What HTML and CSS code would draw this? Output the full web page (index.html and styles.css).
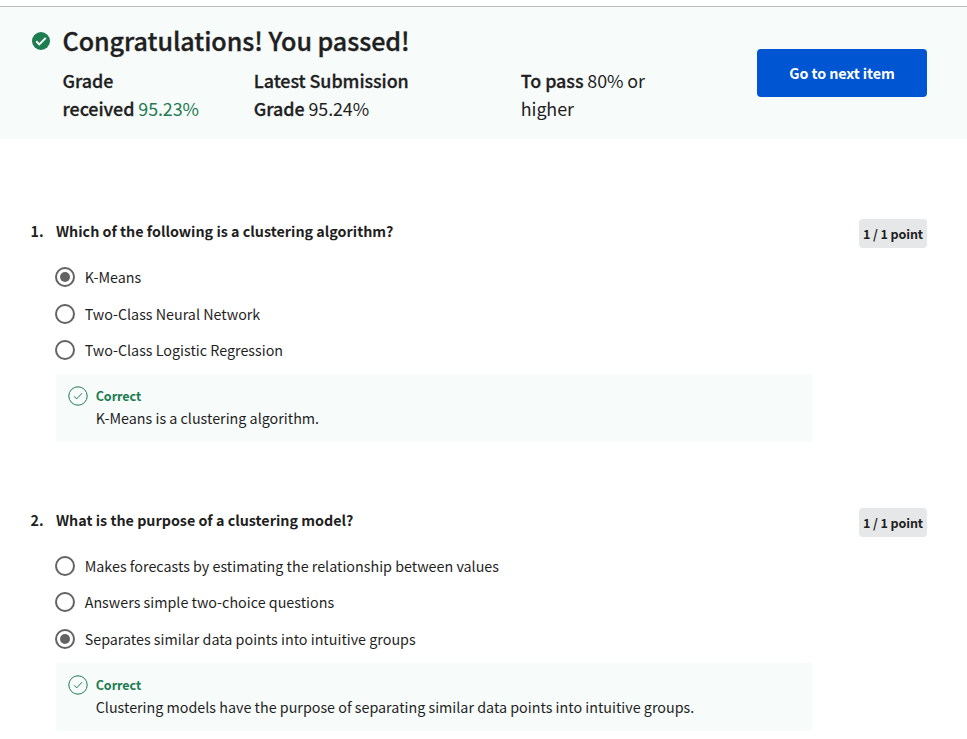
FILE: index.html
```html
<!DOCTYPE html>
<html lang="en">
<head>
<meta charset="utf-8">
<title>Quiz results</title>
<link rel="stylesheet" href="styles.css">
</head>
<body>
<header class="banner">
  <svg class="pass-icon" viewBox="0 0 18 18"><circle cx="9" cy="9" r="9" fill="#1d7c50"/><path d="M4.2 9.3 7.3 12.4 13.8 5.9" fill="none" stroke="#fff" stroke-width="2"/></svg>
  <div class="summary">
    <h1><span>Congratulations! You passed!</span></h1>
    <div class="grades">
      <div class="grade received"><b>Grade<br>received</b> <span class="green">95.23%</span></div>
      <div class="grade latest"><b>Latest Submission<br>Grade</b> <span>95.24%</span></div>
      <div class="grade"><b>To pass</b> <span>80% or<br>higher</span></div>
    </div>
  </div>
  <button class="next"><span>Go to next item</span></button>
</header>
<main>
  <section class="question">
    <div class="number">1.</div>
    <div class="body">
      <h2><span>Which of the following is a clustering algorithm?</span></h2>
      <div class="options">
        <label class="option"><i class="radio checked"></i><span>K-Means</span></label>
        <label class="option"><i class="radio"></i><span>Two-Class Neural Network</span></label>
        <label class="option"><i class="radio"></i><span>Two-Class Logistic Regression</span></label>
      </div>
      <div class="feedback">
        <svg class="ok" viewBox="0 0 20 20"><circle cx="10" cy="10" r="9.2"/><path d="M6.1 10.3 8.7 12.9 14 7.2"/></svg>
        <div><div class="correct"><span>Correct</span></div><p><span>K-Means is a clustering algorithm.</span></p></div>
      </div>
    </div>
    <div class="points"><span>1 / 1 point</span></div>
  </section>
  <section class="question">
    <div class="number">2.</div>
    <div class="body">
      <h2><span>What is the purpose of a clustering model?</span></h2>
      <div class="options">
        <label class="option"><i class="radio"></i><span>Makes forecasts by estimating the relationship between values</span></label>
        <label class="option"><i class="radio"></i><span>Answers simple two-choice questions</span></label>
        <label class="option"><i class="radio checked"></i><span>Separates similar data points into intuitive groups</span></label>
      </div>
      <div class="feedback">
        <svg class="ok" viewBox="0 0 20 20"><circle cx="10" cy="10" r="9.2"/><path d="M6.1 10.3 8.7 12.9 14 7.2"/></svg>
        <div><div class="correct"><span>Correct</span></div><p><span>Clustering models have the purpose of separating similar data points into intuitive groups.</span></p></div>
      </div>
    </div>
    <div class="points"><span>1 / 1 point</span></div>
  </section>
</main>
</body>
</html>
```
FILE: styles.css
```css
* { box-sizing: border-box; }
body {
  margin: 0;
  padding-top: 6px;
  background: #fff;
  color: #1f1f1f;
  font: 14.32px/24px "Noto Sans CJK SC", "Noto Sans", sans-serif;
}
h1, h2, p { margin: 0; }
.banner {
  display: flex;
  height: 133px;
  padding: 16px 40px 0 32px;
  border-top: 1px solid #bdbdbd;
  background: #f7fbfa;
}
.pass-icon { width: 18px; height: 18px; margin: 9px 12.5px 0 0; flex: none; }
.summary { flex: 1; }
h1 { font-size: 25.07px; line-height: 34px; font-weight: 500; letter-spacing: -0.04px; -webkit-text-stroke: 0.35px #1f1f1f; }
.grades { display: flex; margin-top: 9px; font-size: 17.9px; line-height: 28px; letter-spacing: -0.1px; white-space: nowrap; }
.grades b { font-weight: 500; letter-spacing: -0.06px; -webkit-text-stroke: 0.3px #1f1f1f; }
.received { width: 191.3px; }
.latest { width: 267px; }
.green { color: #1d7c50; }
.next {
  width: 170px;
  height: 48px;
  margin-top: 26px;
  border: 0;
  border-radius: 4px;
  background: #0056d2;
  color: #fff;
  font: 700 14.33px/24px "Noto Sans CJK SC", "Noto Sans", sans-serif;
  letter-spacing: -0.1px;
}
main { padding: 80px 40px 0 30px; }
.question { display: flex; }
.question + .question { margin-top: 66px; }
.number { width: 26px; padding-left: 0.6px; font-weight: 700; flex: none; }
.body { width: 756px; flex: none; }
h2 { font-size: 14.32px; line-height: 24px; font-weight: 700; }
.options { display: grid; grid-template-rows: 37px 36px 24px; margin: 22px 0 0 -1px; }
.question + .question .options { grid-template-rows: 36px 37px 24px; }
.option { display: flex; align-items: center; gap: 9.7px; height: 24px; }
.radio {
  display: grid;
  place-items: center;
  width: 20px;
  height: 20px;
  border: 2px solid #636363;
  border-radius: 50%;
}
.checked::after { content: ""; width: 10px; height: 10px; border-radius: 50%; background: #636363; }
.feedback { display: flex; height: 68px; margin-top: 12px; padding: 12px; background: #f7fbfa; }
.ok { width: 20px; height: 20px; margin-right: 7.7px; flex: none; fill: none; stroke: #1d7c50; stroke-width: 1; }
.correct { font-size: 12.54px; line-height: 20px; font-weight: 700; letter-spacing: -0.05px; color: #1d7c50; }
.points {
  width: 68px;
  height: 29px;
  margin-left: auto;
  border-radius: 4px;
  background: #e5e7e8;
  text-align: center;
  font-size: 12.54px;
  line-height: 29px;
  font-weight: 700;
  letter-spacing: -0.1px;
}
```
